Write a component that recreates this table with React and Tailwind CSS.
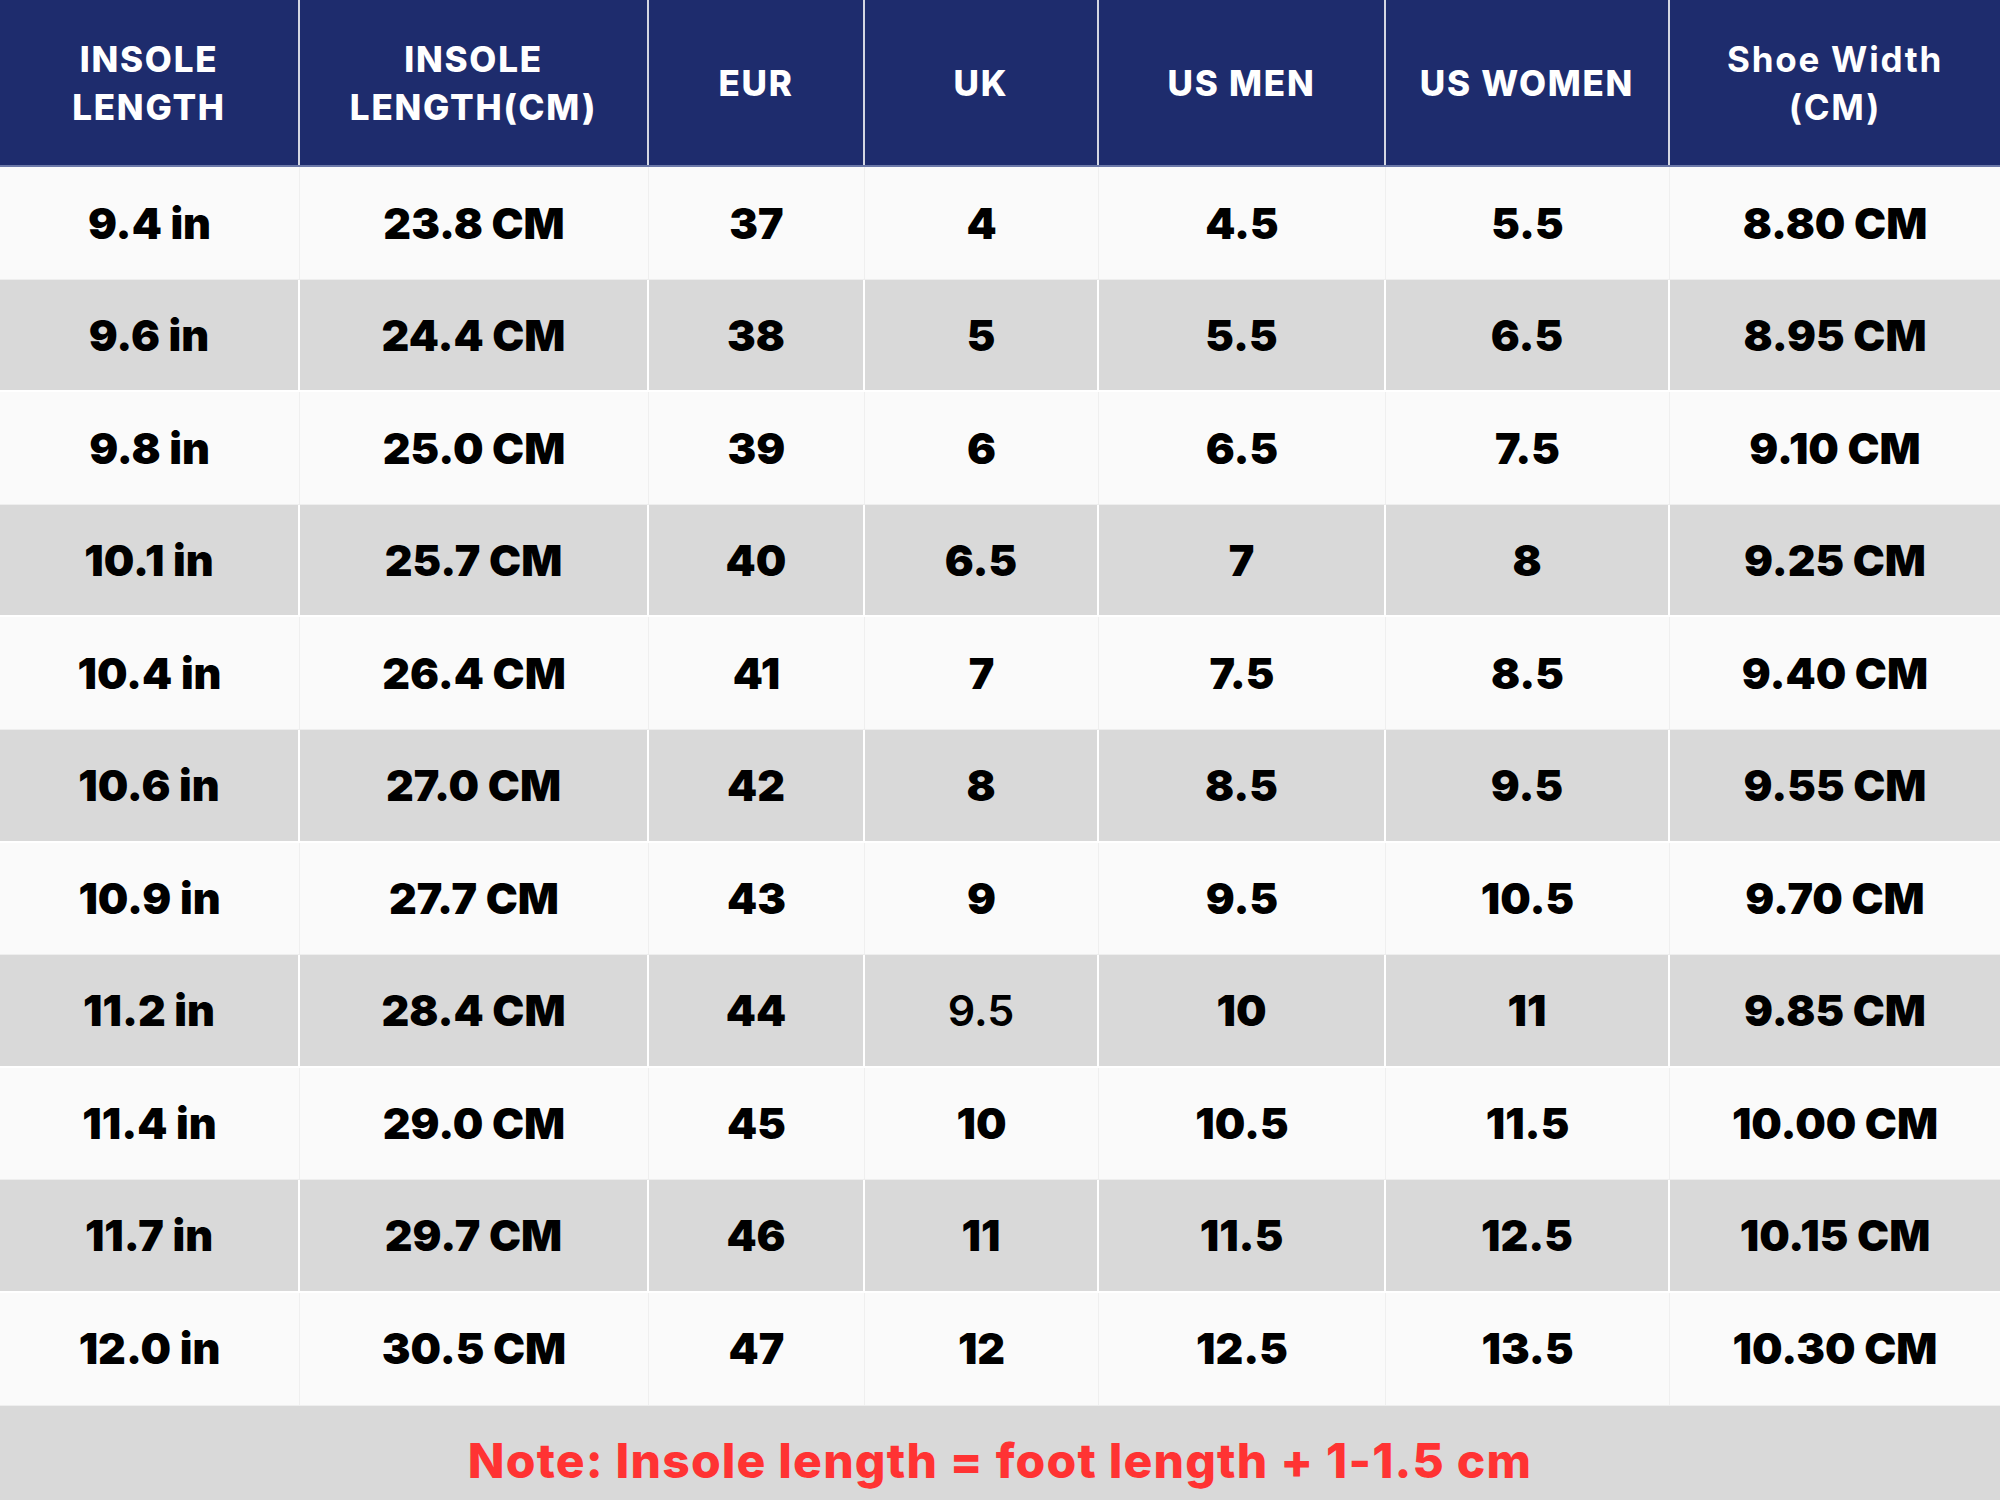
import React from "react";

const cols = [
  { label: ["INSOLE", "LENGTH"], w: "w-[300px]" },
  { label: ["INSOLE", "LENGTH(CM)"], w: "w-[349px]" },
  { label: ["EUR"], w: "w-[216px]" },
  { label: ["UK"], w: "w-[234px]" },
  { label: ["US MEN"], w: "w-[287px]" },
  { label: ["US WOMEN"], w: "w-[284px]" },
  { label: ["Shoe Width", "(CM)"], w: "w-[330px]" },
];

const rows = [
  ["9.4 in", "23.8 CM", "37", "4", "4.5", "5.5", "8.80 CM"],
  ["9.6 in", "24.4 CM", "38", "5", "5.5", "6.5", "8.95 CM"],
  ["9.8 in", "25.0 CM", "39", "6", "6.5", "7.5", "9.10 CM"],
  ["10.1 in", "25.7 CM", "40", "6.5", "7", "8", "9.25 CM"],
  ["10.4 in", "26.4 CM", "41", "7", "7.5", "8.5", "9.40 CM"],
  ["10.6 in", "27.0 CM", "42", "8", "8.5", "9.5", "9.55 CM"],
  ["10.9 in", "27.7 CM", "43", "9", "9.5", "10.5", "9.70 CM"],
  ["11.2 in", "28.4 CM", "44", "9.5", "10", "11", "9.85 CM"],
  ["11.4 in", "29.0 CM", "45", "10", "10.5", "11.5", "10.00 CM"],
  ["11.7 in", "29.7 CM", "46", "11", "11.5", "12.5", "10.15 CM"],
  ["12.0 in", "30.5 CM", "47", "12", "12.5", "13.5", "10.30 CM"],
];

function App() {
  return (
    <div className="w-[2000px] h-[1500px] flex flex-col bg-[#d9d9d9] font-['Inter',sans-serif] overflow-hidden">
      {/* header */}
      <div className="flex h-[167px] shrink-0 bg-[#1e2c6d] border-b-2 border-[#6b78a8]">
        {cols.map((c, i) => (
          <div
            key={i}
            className={`${c.w} flex flex-col items-center justify-center text-white text-[35px] leading-[48px] tracking-[0.05em] ${
              i === 6 ? "font-bold" : "font-extrabold"
            } ${i < 6 ? "border-r-2 border-[#d4d7e3]" : ""}`}
          >
            {c.label.map((l) => (
              <span key={l}>{l}</span>
            ))}
          </div>
        ))}
      </div>

      {/* body */}
      {rows.map((r, ri) => {
        const grey = ri % 2 === 1;
        return (
          <div
            key={ri}
            className={`flex h-[112.6px] shrink-0 ${grey ? "bg-[#d9d9d9] border-b-2 border-white" : "bg-[#fafafa] border-b border-[#eeeeee]"}`}
          >
            {r.map((v, ci) => (
              <div
                key={ci}
                className={`${cols[ci].w} flex items-center justify-center text-black text-[43px] ${
                  ri === 7 && ci === 3 ? "font-semibold" : "font-black"
                } ${ci < 6 ? (grey ? "border-r-2 border-white" : "border-r border-[#efefef]") : ""}`}
              >
                {v}
              </div>
            ))}
          </div>
        );
      })}

      {/* note */}
      <div className="flex-1 flex items-center justify-center bg-[#d9d9d9]">
        <p className="text-[#ff3333] text-[48px] font-extrabold tracking-[0.025em] pt-4">
          Note: Insole length = foot length + 1-1.5 cm
        </p>
      </div>
    </div>
  );
}

export default App;
